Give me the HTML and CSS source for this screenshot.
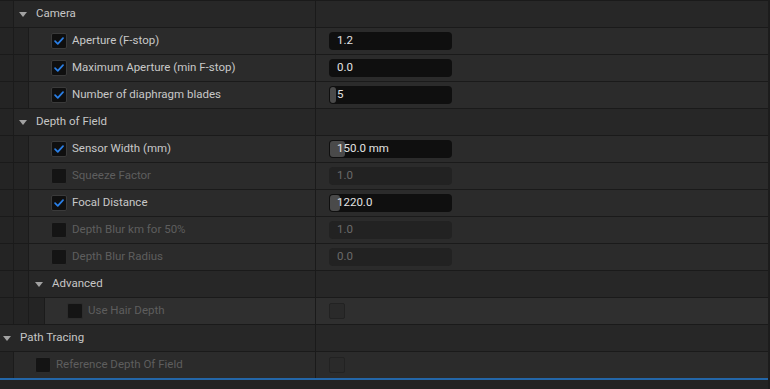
FILE: index.html
```html
<!DOCTYPE html>
<html>
<head>
<meta charset="utf-8">
<link rel="stylesheet" href="styles.css">
</head>
<body>
<div class="panel">

  <div class="row hdr">
    <div class="name"><span class="well w1"></span><div class="content pad-h1"><span class="tri"></span><span class="htext">Camera</span></div></div>
    <div class="value"></div>
  </div>

  <div class="row">
    <div class="name"><span class="well w1"></span><span class="well w2"></span><div class="content pad-c"><span class="cb on"><svg viewBox="0 0 16 16"><path d="M3.5 8.2 L6.6 11.2 L12.6 4.8"/></svg></span><span class="label">Aperture (F-stop)</span></div></div>
    <div class="value"><div class="field"><span class="ftext">1.2</span></div></div>
  </div>

  <div class="row">
    <div class="name"><span class="well w1"></span><span class="well w2"></span><div class="content pad-c"><span class="cb on"><svg viewBox="0 0 16 16"><path d="M3.5 8.2 L6.6 11.2 L12.6 4.8"/></svg></span><span class="label">Maximum Aperture (min F-stop)</span></div></div>
    <div class="value"><div class="field"><span class="ftext">0.0</span></div></div>
  </div>

  <div class="row">
    <div class="name"><span class="well w1"></span><span class="well w2"></span><div class="content pad-c"><span class="cb on"><svg viewBox="0 0 16 16"><path d="M3.5 8.2 L6.6 11.2 L12.6 4.8"/></svg></span><span class="label">Number of diaphragm blades</span></div></div>
    <div class="value"><div class="field"><span class="knob" style="width:6px"></span><span class="ftext">5</span></div></div>
  </div>

  <div class="row hdr">
    <div class="name"><span class="well w1"></span><div class="content pad-h1"><span class="tri"></span><span class="htext">Depth of Field</span></div></div>
    <div class="value"></div>
  </div>

  <div class="row">
    <div class="name"><span class="well w1"></span><span class="well w2"></span><div class="content pad-c"><span class="cb on"><svg viewBox="0 0 16 16"><path d="M3.5 8.2 L6.6 11.2 L12.6 4.8"/></svg></span><span class="label">Sensor Width (mm)</span></div></div>
    <div class="value"><div class="field"><span class="knob" style="width:15px"></span><span class="ftext">150.0 mm</span></div></div>
  </div>

  <div class="row">
    <div class="name"><span class="well w1"></span><span class="well w2"></span><div class="content pad-c"><span class="cb"></span><span class="label off">Squeeze Factor</span></div></div>
    <div class="value"><div class="field off"><span class="ftext">1.0</span></div></div>
  </div>

  <div class="row">
    <div class="name"><span class="well w1"></span><span class="well w2"></span><div class="content pad-c"><span class="cb on"><svg viewBox="0 0 16 16"><path d="M3.5 8.2 L6.6 11.2 L12.6 4.8"/></svg></span><span class="label">Focal Distance</span></div></div>
    <div class="value"><div class="field"><span class="knob" style="width:10px"></span><span class="ftext">1220.0</span></div></div>
  </div>

  <div class="row">
    <div class="name"><span class="well w1"></span><span class="well w2"></span><div class="content pad-c"><span class="cb"></span><span class="label off">Depth Blur km for 50%</span></div></div>
    <div class="value"><div class="field off"><span class="ftext">1.0</span></div></div>
  </div>

  <div class="row">
    <div class="name"><span class="well w1"></span><span class="well w2"></span><div class="content pad-c"><span class="cb"></span><span class="label off">Depth Blur Radius</span></div></div>
    <div class="value"><div class="field off"><span class="ftext">0.0</span></div></div>
  </div>

  <div class="row hdr">
    <div class="name"><span class="well w1"></span><span class="well w2"></span><div class="content pad-h2"><span class="tri"></span><span class="htext">Advanced</span></div></div>
    <div class="value"></div>
  </div>

  <div class="row deep">
    <div class="name"><span class="well w1"></span><span class="well w2"></span><span class="well w3"></span><div class="content pad-c"><span class="cb"></span><span class="label off">Use Hair Depth</span></div></div>
    <div class="value"><span class="vcb"></span></div>
  </div>

  <div class="row hdr">
    <div class="name"><div class="content pad-h0"><span class="tri"></span><span class="htext">Path Tracing</span></div></div>
    <div class="value"></div>
  </div>

  <div class="row">
    <div class="name"><span class="well w1"></span><div class="content pad-c1"><span class="cb"></span><span class="label off">Reference Depth Of Field</span></div></div>
    <div class="value"><span class="vcb"></span></div>
  </div>

  <div class="footer"></div>
</div>
</body>
</html>
```

FILE: styles.css
```css
html, body {
  margin: 0;
  padding: 0;
  background: #1c1c1c;
  font-family: Roboto, "Liberation Sans", sans-serif;
  font-size: 11.5px;
}

.panel {
  width: 768px;
  height: 389px;
  background: #232323;
  display: flex;
  flex-direction: column;
  overflow: hidden;
}

.row {
  display: flex;
  height: 26px;
  border-top: 1px solid #1a1a1a;
  background: #2b2b2b;
  flex: none;
}

.row.hdr {
  background: #272727;
}

.row.deep {
  background: #2f2f2f;
}

.name {
  width: 315px;
  flex: none;
  display: flex;
  border-right: 1px solid #1a1a1a;
}

.well {
  flex: none;
  background: #242424;
  border-right: 1px solid #1b1b1b;
}
.w1 { width: 13px; }
.w2 { width: 14px; }
.w3 { width: 15px; }

.content {
  flex: 1;
  display: flex;
  align-items: center;
  min-width: 0;
}

.pad-h0 { padding-left: 3px; }
.pad-h1 { padding-left: 5px; }
.pad-h2 { padding-left: 6px; }
.pad-c { padding-left: 22px; }
.pad-c1 { padding-left: 21px; }

.tri {
  width: 0;
  height: 0;
  border-left: 4px solid transparent;
  border-right: 4px solid transparent;
  border-top: 5px solid #a2a2a2;
  margin-right: 9px;
  flex: none;
}

.htext,
.label,
.ftext {
  position: relative;
  top: -1px;
}

.htext {
  color: #c6c6c6;
}

.cb {
  width: 14px;
  height: 14px;
  border: 1px solid #2c2c2c;
  border-radius: 2px;
  background: #141414;
  flex: none;
  margin-right: 5px;
  display: flex;
  align-items: center;
  justify-content: center;
}
.cb.on {
  border-color: #3a3a3a;
  background: #0f0f0f;
}
.cb svg {
  width: 16px;
  height: 16px;
}
.cb svg path {
  fill: none;
  stroke: #2a7fe6;
  stroke-width: 2;
  stroke-linecap: round;
  stroke-linejoin: round;
}

.label {
  color: #c8c8c8;
  white-space: nowrap;
}
.label.off {
  color: #5e5e5e;
}

.value {
  flex: 1;
  display: flex;
  align-items: center;
  padding-left: 13px;
}

.field {
  position: relative;
  width: 123px;
  height: 18px;
  border-radius: 4px;
  background: #0f0f0f;
  display: flex;
  align-items: center;
  overflow: hidden;
}
.field.off {
  background: #222222;
}

.knob {
  position: absolute;
  left: 1px;
  top: 1px;
  bottom: 1px;
  background: #4a4a4a;
  border-radius: 3px;
}

.ftext {
  padding-left: 8px;
  color: #e2e2e2;
}
.field.off .ftext {
  color: #6a6a6a;
}

.vcb {
  width: 14px;
  height: 14px;
  border: 1px solid #222222;
  border-radius: 2px;
  background: #2a2a2a;
}

.footer {
  flex: 1;
  border-top: 2px solid #2366a8;
  background: #232323;
}
```
